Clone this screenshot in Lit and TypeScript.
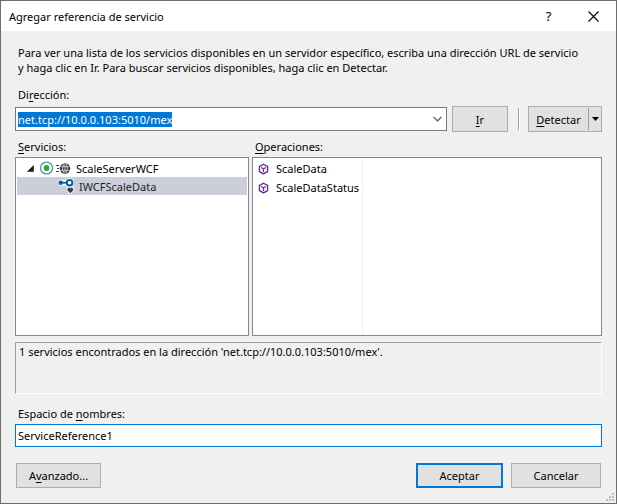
import { LitElement, html, css } from "lit";
import { customElement, state, query } from "lit/decorators.js";

const operationIcon = () => html`<svg class="icon" viewBox="0 0 12 12" width="12" height="12" aria-hidden="true">
  <path d="M5.5 1.2 L9.6 3.4 V8.6 L5.5 10.9 L1.4 8.6 V3.4 Z" fill="#f6f0fb" stroke="#642d90" stroke-width="1.3" />
  <path d="M3.2 4.6 L5.5 5.9 L7.8 4.6 M5.5 5.9 V9" fill="none" stroke="#642d90" stroke-width="1.2" />
</svg>`;

const expandedIcon = () => html`<svg viewBox="0 0 7 7" width="7" height="7" aria-hidden="true">
  <path d="M6.5 0.5 V6.5 H0.5 Z" fill="#1e1e1e" stroke="#1e1e1e" stroke-width="0.6" />
</svg>`;

const serviceIcon = () => html`<svg class="icon" viewBox="0 0 32 14" width="32" height="14" aria-hidden="true">
  <circle cx="7.5" cy="7" r="6" fill="#fff" stroke="#3f7fae" stroke-width="1.1" />
  <circle cx="7.5" cy="7" r="2.9" fill="#36a62d" />
  <path d="M17 4.5 H20 M18 7.5 H20 M17 10.5 H20" stroke="#424242" stroke-width="1" />
  <circle cx="26" cy="7.5" r="5.2" fill="#3c3c3c" />
  <path d="M21.4 5.7 H30.6 M21.4 9.3 H30.6 M26 2.8 V12.2 M24.6 3.2 Q22.4 7.5 24.6 11.8 M27.4 3.2 Q29.6 7.5 27.4 11.8"
    fill="none" stroke="#f0f0f0" stroke-width="0.7" />
</svg>`;

const interfaceIcon = () => html`<svg class="icon" viewBox="0 0 16 16" width="16" height="16" aria-hidden="true">
  <path d="M2.6 4.7 H9" stroke="#fff" stroke-width="5.4" stroke-linecap="round" />
  <circle cx="11.6" cy="4.7" r="4.4" fill="#fff" />
  <path d="M8.6 8.6 H16 V13 L13 16 H11.6 L8.6 13 Z" fill="#f2f2f6" />
  <circle cx="2.7" cy="4.7" r="2.2" fill="#00639c" />
  <path d="M3 4.7 H8.5" stroke="#00639c" stroke-width="1.8" />
  <circle cx="11.6" cy="4.7" r="2.8" fill="#fff" stroke="#00639c" stroke-width="2" />
  <path d="M12.3 15.2 L9.5 12.4 V10.8 L10.4 9.8 H11.6 L12.3 10.4 L13 9.8 H14.2 L15.1 10.8 V12.4 Z" fill="#3a3a3a" />
</svg>`;

@customElement("app-root")
export class AppRoot extends LitElement {
  static styles = css`
    :host {
      display: block;
      font: 11px/15px "Noto Sans", "Open Sans", sans-serif;
      color: #000;
    }
    * { box-sizing: border-box; }
    button, input { font: inherit; color: inherit; border-radius: 0; margin: 0; }
    ul { list-style: none; margin: 0; padding: 0; }
    u { text-underline-offset: 2px; }
    svg { display: block; flex: none; }
    .dialog {
      position: relative;
      min-height: 100vh;
      display: flex;
      flex-direction: column;
      background: #f0f0f0;
      border: 1px solid #6e6e70;
    }
    .titlebar { height: 30px; background: #fff; display: flex; align-items: center; padding-left: 8px; }
    .title { flex: 1; margin: 0; font-size: 11px; font-weight: 400; }
    .caption { width: 45px; height: 30px; padding: 0; border: 0; background: none; display: grid; place-items: center; }
    .help { font-size: 13px; }
    .content { flex: 1; display: flex; flex-direction: column; padding: 14px 14px 15px; }
    .intro { margin: 0 3px 12px; }
    .label { display: block; padding-left: 3px; margin: 0 0 3px; font-size: 11px; font-weight: 400; }
    .address-row { display: flex; align-items: center; margin: 1px 0 7px; }
    .combo { flex: 1; min-width: 0; height: 24px; display: flex; background: #fff; border: 1px solid #7a7a7a; }
    .combo-input { flex: 1; min-width: 0; border: 0; padding: 0 2px; outline: 0; background: none; }
    .combo-input::selection { background: #0078d7; color: #fff; }
    .combo-arrow { width: 18px; padding: 0; border: 0; background: none; display: grid; place-items: center; }
    .btn { height: 25px; padding: 0; background: #e1e1e1; border: 1px solid #adadad; }
    .go { width: 56px; height: 26px; margin-left: 5px; }
    .rule { width: 2px; height: 22px; margin: 0 8px 0 10px; background: #a0a0a0; border-right: 1px solid #fff; }
    .split { display: flex; align-items: center; width: 74px; height: 26px; background: #e1e1e1; border: 1px solid #adadad; }
    .split-main { flex: 1; padding: 0; border: 0; background: none; }
    .split-arrow {
      width: 13px;
      height: 22px;
      padding: 0;
      border: 0;
      border-left: 1px solid #a0a0a0;
      background: none;
      display: grid;
      place-items: center;
    }
    .lists { flex: 1; display: grid; grid-template-columns: 234fr 350fr; gap: 3px; margin-bottom: 6px; }
    .pane { display: flex; flex-direction: column; min-width: 0; }
    .box { flex: 1; padding: 1px; background: #fff; border: 1px solid #828790; display: flex; flex-direction: column; }
    .row { display: flex; align-items: center; height: 18px; }
    .server { padding-left: 10px; }
    .server .icon { margin: 0 5px; }
    .contract { padding-left: 41px; gap: 5px; }
    .selected { background: #cccedb; color: #1e1e1e; }
    .operations { flex: 1; width: 109px; border-right: 1px solid #e5f1fb; }
    .operation { height: 19px; padding-left: 4px; gap: 6px; }
    .status {
      display: block;
      height: 52px;
      margin-bottom: 12px;
      padding: 1px 3px;
      border: 1px solid;
      border-color: #a0a0a0 #fff #fff #a0a0a0;
    }
    .namespace { width: 100%; height: 23px; padding: 0 2px; background: #fff; border: 1px solid #0078d7; outline: 0; }
    .actions { display: flex; gap: 8px; margin-top: 16px; padding: 0 1px; }
    .advanced { width: 85px; margin-right: auto; }
    .accept { width: 87px; border: 2px solid #0078d7; }
    .cancel { width: 90px; }
    .grip { position: absolute; right: 2px; bottom: 2px; }
  `;

  @state() private address = "net.tcp://10.0.0.103:5010/mex";
  @state() private operations = ["ScaleData", "ScaleDataStatus"];
  @query(".combo-input") private addressInput!: HTMLInputElement;

  firstUpdated() {
    this.addressInput.focus();
    this.addressInput.select();
  }

  render() {
    return html`
      <main class="dialog">
        <header class="titlebar">
          <h1 class="title">Agregar referencia de servicio</h1>
          <button class="caption help" aria-label="Ayuda">?</button>
          <button class="caption" aria-label="Cerrar">
            <svg viewBox="0 0 11 11" width="11" height="11"><path d="M0.5 0.5 L10.5 10.5 M10.5 0.5 L0.5 10.5" stroke="#000" stroke-width="1.1" /></svg>
          </button>
        </header>
        <div class="content">
          <p class="intro">
            Para ver una lista de los servicios disponibles en un servidor específico, escriba una dirección URL de servicio<br />
            y haga clic en Ir. Para buscar servicios disponibles, haga clic en Detectar.
          </p>
          <label class="label" for="address">Di<u>r</u>ección:</label>
          <div class="address-row">
            <div class="combo">
              <input id="address" class="combo-input" type="text" spellcheck="false" .value=${this.address} />
              <button class="combo-arrow" aria-label="Direcciones recientes">
                <svg viewBox="0 0 9 6" width="9" height="6"><path d="M0.5 0.8 L4.5 4.8 L8.5 0.8" fill="none" stroke="#505050" stroke-width="1.2" /></svg>
              </button>
            </div>
            <button class="btn go"><u>I</u>r</button>
            <div class="rule"></div>
            <div class="split">
              <button class="split-main"><u>D</u>etectar</button>
              <button class="split-arrow" aria-label="Opciones de detección">
                <svg viewBox="0 0 7 4" width="7" height="4"><path d="M0 0 H7 L3.5 4 Z" fill="#000" /></svg>
              </button>
            </div>
          </div>
          <div class="lists">
            <section class="pane">
              <h2 class="label"><u>S</u>ervicios:</h2>
              <div class="box">
                <ul role="tree" aria-label="Servicios">
                  <li role="treeitem" aria-expanded="true">
                    <div class="row server">${expandedIcon()}${serviceIcon()}<span>ScaleServerWCF</span></div>
                    <ul role="group">
                      <li class="row contract selected" role="treeitem" aria-selected="true">${interfaceIcon()}<span>IWCFScaleData</span></li>
                    </ul>
                  </li>
                </ul>
              </div>
            </section>
            <section class="pane">
              <h2 class="label"><u>O</u>peraciones:</h2>
              <div class="box">
                <ul class="operations">
                  ${this.operations.map((name) => html`<li class="row operation">${operationIcon()}<span>${name}</span></li>`)}
                </ul>
              </div>
            </section>
          </div>
          <output class="status">1 servicios encontrados en la dirección 'net.tcp://10.0.0.103:5010/mex'.</output>
          <label class="label" for="namespace">Espacio de <u>n</u>ombres:</label>
          <input id="namespace" class="namespace" type="text" spellcheck="false" value="ServiceReference1" />
          <footer class="actions">
            <button class="btn advanced">A<u>v</u>anzado...</button>
            <button class="btn accept">Aceptar</button>
            <button class="btn cancel">Cancelar</button>
          </footer>
        </div>
        <svg class="grip" viewBox="0 0 8 8" width="8" height="8" aria-hidden="true">
          <path d="M6 0h2v2h-2z M3 3h2v2h-2z M6 3h2v2h-2z M0 6h2v2h-2z M3 6h2v2h-2z M6 6h2v2h-2z" fill="#bfbfbf" />
        </svg>
      </main>
    `;
  }
}
